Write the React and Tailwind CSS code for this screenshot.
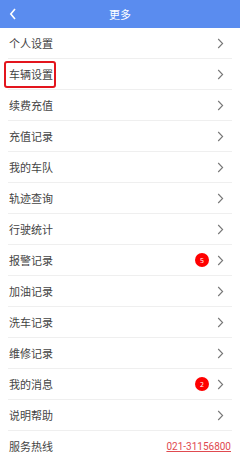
import React from "react";

const items = [
  { t: "个人设置" },
  { t: "车辆设置", box: true },
  { t: "续费充值" },
  { t: "充值记录" },
  { t: "我的车队" },
  { t: "轨迹查询" },
  { t: "行驶统计" },
  { t: "报警记录", badge: "5" },
  { t: "加油记录" },
  { t: "洗车记录" },
  { t: "维修记录" },
  { t: "我的消息", badge: "2" },
  { t: "说明帮助" },
];

function Chevron() {
  return (
    <svg width="7" height="11" viewBox="0 0 7 11" className="shrink-0">
      <path d="M1.2 1 L5.6 5.5 L1.2 10" fill="none" stroke="#777" strokeWidth="1.1" />
    </svg>
  );
}

export default function App() {
  return (
    <div
      className="w-[240px] h-[460px] overflow-hidden bg-white"
      style={{ fontFamily: '"Noto Sans CJK SC", "Noto Sans", sans-serif' }}
    >
      <div className="h-[28px] bg-[#5a8cef] flex items-center relative">
        <svg width="8" height="12" viewBox="0 0 8 12" className="absolute left-[9px] top-[8px]">
          <path d="M6 1 L1.8 6 L6 11" fill="none" stroke="#fff" strokeWidth="1.6" />
        </svg>
        <div className="flex-1 text-center text-white text-[11px] leading-none">更多</div>
      </div>
      {items.map((it) => (
        <div
          key={it.t}
          className="mx-2 h-[31px] border-b border-[#efefef] flex items-center justify-between"
        >
          {it.box ? (
            <span className="-ml-1 h-[27px] flex items-center border-2 border-[#e3151d] rounded-[3px] pl-[3px] pr-[1px] text-[11px] text-[#444]">
              {it.t}
            </span>
          ) : (
            <span className="pl-px text-[11px] text-[#444]">{it.t}</span>
          )}
          <div className="flex items-center gap-2 pr-2">
            {it.badge && (
              <span className="w-[14px] h-[14px] rounded-full bg-[#f00] text-white text-[7px] leading-none flex items-center justify-center">
                {it.badge}
              </span>
            )}
            <Chevron />
          </div>
        </div>
      ))}
      <div className="mx-2 h-[31px] flex items-center justify-between">
        <span className="pl-px text-[11px] text-[#444]">服务热线</span>
        <span
          className="text-[10px] text-[#e04a50] underline pr-px"
          style={{ fontFamily: 'Roboto, sans-serif' }}
        >
          021-31156800
        </span>
      </div>
    </div>
  );
}
